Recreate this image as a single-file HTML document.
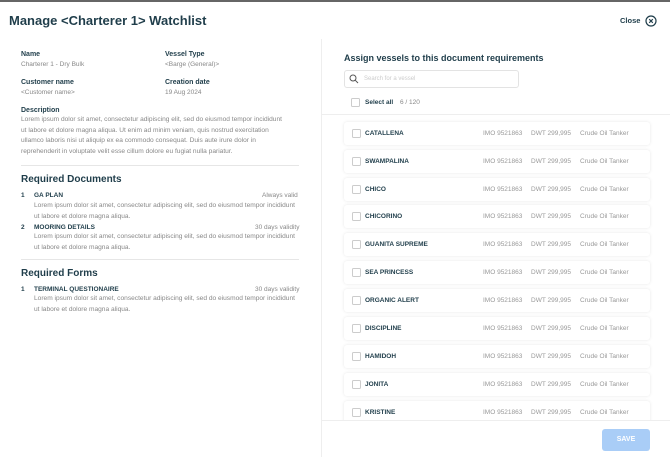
<!DOCTYPE html>
<html><head><style>
*{margin:0;padding:0;box-sizing:border-box}
body{width:670px;height:468px;background:#fff;font-family:"Liberation Sans",Arial,sans-serif;position:relative;overflow:hidden;color:#1f3d4a}
.a{position:absolute;white-space:nowrap}
.lbl{font-size:7px;font-weight:bold;color:#1f3d4a}
.val{font-size:6.5px;color:#888}
.p{font-size:6.6px;color:#888;line-height:10.5px;white-space:normal}
.h2{font-size:10px;font-weight:bold;color:#1f3d4a}
.it{font-size:6.5px;font-weight:bold;color:#1f3d4a}
.row{position:absolute;left:344px;width:306px;height:23px;background:#fff;border-radius:3px;box-shadow:0 0 3px rgba(0,0,0,.1)}
.row .cb{position:absolute;left:8px;top:7px;width:9px;height:9px;border:1px solid #ccc;border-radius:1.5px}
.row span{position:absolute;top:8px;font-size:6.5px;color:#999}
.row .n{left:21px;font-weight:bold;color:#1f3d4a}
</style></head><body>
<div class="a" style="left:0;top:0;width:670px;height:2px;background:#666"></div>
<div class="a" style="left:9px;top:13px;font-size:13px;font-weight:bold;color:#1f3d4a">Manage &lt;Charterer 1&gt; Watchlist</div>
<div class="a" style="left:620px;top:16px;font-size:7.5px;font-weight:bold;color:#1f3d4a">Close</div>
<svg class="a" style="left:645px;top:15px" width="12" height="12" viewBox="0 0 12 12"><circle cx="6" cy="6" r="5" fill="none" stroke="#1f3d4a" stroke-width="1.2"/><path d="M4.2 4.2L7.8 7.8M7.8 4.2L4.2 7.8" stroke="#1f3d4a" stroke-width="1.1"/></svg>
<div class="a" style="left:321px;top:39px;width:1px;height:418px;background:#eee"></div>

<div class="a lbl" style="left:21px;top:51px">Name</div>
<div class="a val" style="left:21px;top:61px">Charterer 1 - Dry Bulk</div>
<div class="a lbl" style="left:165px;top:51px">Vessel Type</div>
<div class="a val" style="left:165px;top:61px">&lt;Barge (General)&gt;</div>
<div class="a lbl" style="left:21px;top:79px">Customer name</div>
<div class="a val" style="left:21px;top:89px">&lt;Customer name&gt;</div>
<div class="a lbl" style="left:165px;top:79px">Creation date</div>
<div class="a val" style="left:165px;top:89px">19 Aug 2024</div>
<div class="a lbl" style="left:21px;top:107px">Description</div>
<div class="a p" style="left:21px;top:115px;width:282px">Lorem ipsum dolor sit amet, consectetur adipiscing elit, sed do eiusmod tempor incididunt<br>ut labore et dolore magna aliqua. Ut enim ad minim veniam, quis nostrud exercitation<br>ullamco laboris nisi ut aliquip ex ea commodo consequat. Duis aute irure dolor in<br>reprehenderit in voluptate velit esse cillum dolore eu fugiat nulla pariatur.</div>
<div class="a" style="left:21px;top:165px;width:278px;height:1px;background:#e6e6e6"></div>
<div class="a h2" style="left:21px;top:174px">Required Documents</div>
<div class="a it" style="left:21px;top:192px">1</div>
<div class="a it" style="left:34px;top:192px">GA PLAN</div>
<div class="a val" style="left:262px;top:192px">Always valid</div>
<div class="a p" style="left:34px;top:201px;width:270px">Lorem ipsum dolor sit amet, consectetur adipiscing elit, sed do eiusmod tempor incididunt<br>ut labore et dolore magna aliqua.</div>
<div class="a it" style="left:21px;top:224px">2</div>
<div class="a it" style="left:34px;top:224px">MOORING DETAILS</div>
<div class="a val" style="left:255px;top:224px">30 days validity</div>
<div class="a p" style="left:34px;top:232px;width:270px">Lorem ipsum dolor sit amet, consectetur adipiscing elit, sed do eiusmod tempor incididunt<br>ut labore et dolore magna aliqua.</div>
<div class="a" style="left:21px;top:259px;width:278px;height:1px;background:#e6e6e6"></div>
<div class="a h2" style="left:21px;top:268px">Required Forms</div>
<div class="a it" style="left:21px;top:286px">1</div>
<div class="a it" style="left:34px;top:286px">TERMINAL QUESTIONAIRE</div>
<div class="a val" style="left:255px;top:286px">30 days validity</div>
<div class="a p" style="left:34px;top:294px;width:270px">Lorem ipsum dolor sit amet, consectetur adipiscing elit, sed do eiusmod tempor incididunt<br>ut labore et dolore magna aliqua.</div>

<div class="a" style="left:344px;top:53px;font-size:9px;font-weight:bold;color:#1f3d4a">Assign vessels to this document requirements</div>
<div class="a" style="left:344px;top:70px;width:175px;height:18px;border:1px solid #e3e3e3;border-radius:3px"></div>
<svg class="a" style="left:349px;top:74px" width="10" height="10" viewBox="0 0 10 10"><circle cx="4" cy="4" r="3" fill="none" stroke="#555" stroke-width="1"/><line x1="6.3" y1="6.3" x2="9" y2="9" stroke="#555" stroke-width="1"/></svg>
<div class="a" style="left:364px;top:76px;font-size:6px;color:#ccc">Search for a vessel</div>
<div class="a" style="left:351px;top:98px;width:9px;height:9px;border:1px solid #ccc;border-radius:1.5px"></div>
<div class="a" style="left:365px;top:99px;font-size:6.5px;font-weight:bold;color:#1f3d4a">Select all</div>
<div class="a" style="left:400px;top:99px;font-size:6.5px;color:#888">6 / 120</div>
<div class="a" style="left:322px;top:114px;width:348px;height:1px;background:#eee"></div>

<div class="row" style="top:122px"><div class="cb"></div><span class="n">CATALLENA</span><span style="left:139px">IMO 9521863</span><span style="left:187px">DWT 299,995</span><span style="left:236px">Crude Oil Tanker</span></div>
<div class="row" style="top:150px"><div class="cb"></div><span class="n">SWAMPALINA</span><span style="left:139px">IMO 9521863</span><span style="left:187px">DWT 299,995</span><span style="left:236px">Crude Oil Tanker</span></div>
<div class="row" style="top:178px"><div class="cb"></div><span class="n">CHICO</span><span style="left:139px">IMO 9521863</span><span style="left:187px">DWT 299,995</span><span style="left:236px">Crude Oil Tanker</span></div>
<div class="row" style="top:205px"><div class="cb"></div><span class="n">CHICORINO</span><span style="left:139px">IMO 9521863</span><span style="left:187px">DWT 299,995</span><span style="left:236px">Crude Oil Tanker</span></div>
<div class="row" style="top:233px"><div class="cb"></div><span class="n">GUANITA SUPREME</span><span style="left:139px">IMO 9521863</span><span style="left:187px">DWT 299,995</span><span style="left:236px">Crude Oil Tanker</span></div>
<div class="row" style="top:261px"><div class="cb"></div><span class="n">SEA PRINCESS</span><span style="left:139px">IMO 9521863</span><span style="left:187px">DWT 299,995</span><span style="left:236px">Crude Oil Tanker</span></div>
<div class="row" style="top:289px"><div class="cb"></div><span class="n">ORGANIC ALERT</span><span style="left:139px">IMO 9521863</span><span style="left:187px">DWT 299,995</span><span style="left:236px">Crude Oil Tanker</span></div>
<div class="row" style="top:317px"><div class="cb"></div><span class="n">DISCIPLINE</span><span style="left:139px">IMO 9521863</span><span style="left:187px">DWT 299,995</span><span style="left:236px">Crude Oil Tanker</span></div>
<div class="row" style="top:345px"><div class="cb"></div><span class="n">HAMIDOH</span><span style="left:139px">IMO 9521863</span><span style="left:187px">DWT 299,995</span><span style="left:236px">Crude Oil Tanker</span></div>
<div class="row" style="top:373px"><div class="cb"></div><span class="n">JONITA</span><span style="left:139px">IMO 9521863</span><span style="left:187px">DWT 299,995</span><span style="left:236px">Crude Oil Tanker</span></div>
<div class="row" style="top:401px"><div class="cb"></div><span class="n">KRISTINE</span><span style="left:139px">IMO 9521863</span><span style="left:187px">DWT 299,995</span><span style="left:236px">Crude Oil Tanker</span></div>

<div class="a" style="left:322px;top:420px;width:348px;height:37px;background:#fff;border-top:1px solid #eee"></div>
<div class="a" style="left:602px;top:429px;width:48px;height:22px;background:#a9cdf7;border-radius:3px;color:#fff;font-size:7px;font-weight:bold;text-align:center;line-height:22px">SAVE</div>
</body></html>
